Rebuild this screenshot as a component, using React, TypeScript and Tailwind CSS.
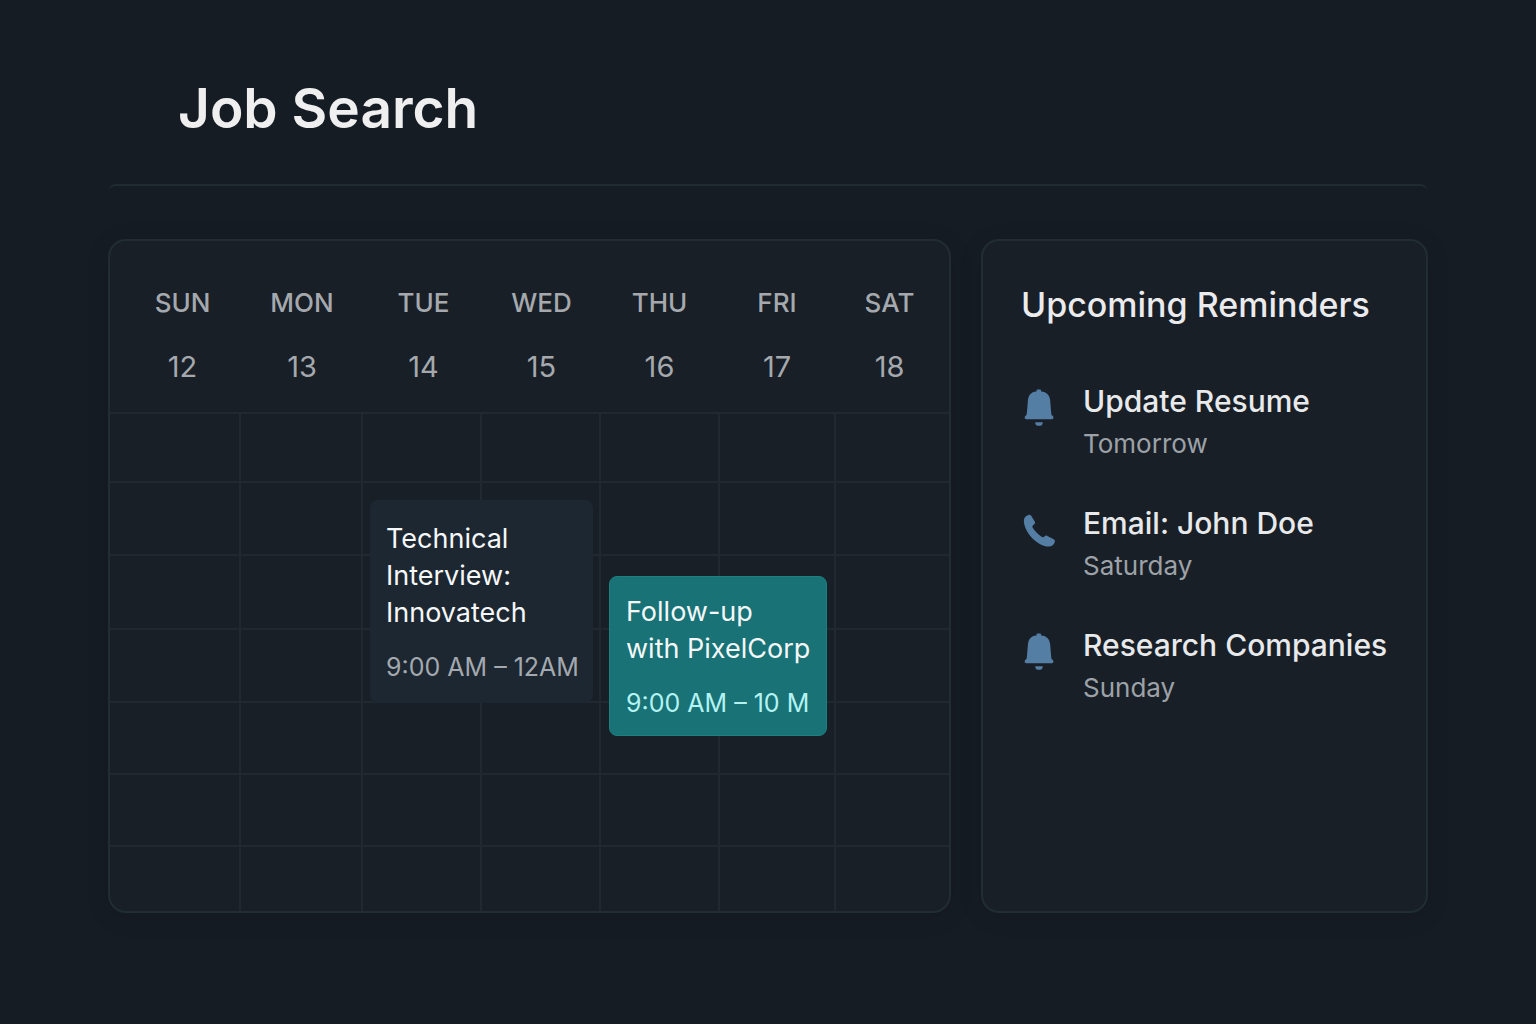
import React from "react";

type CalendarEvent = {
  row: number;
  col: number;
  lines: string[];
  time: string;
  tone: "slate" | "teal";
};

const days = [
  { name: "SUN", date: 12, width: "w-[131px]", pad: "pl-3.5" },
  { name: "MON", date: 13, width: "w-[122px]", pad: "" },
  { name: "TUE", date: 14, width: "w-[119px]", pad: "pl-0.5" },
  { name: "WED", date: 15, width: "w-[119px]", pad: "" },
  { name: "THU", date: 16, width: "w-[119px]", pad: "pr-0.5" },
  { name: "FRI", date: 17, width: "w-[116px]", pad: "pr-0.5" },
  { name: "SAT", date: 18, width: "w-[113px]", pad: "pr-1.5" },
];

const rowHeights = ["h-[69px]", "h-[73px]", "h-[74px]", "h-[73px]", "h-[72px]", "h-[72px]", "h-[66px]"];

const events: CalendarEvent[] = [
  { row: 1, col: 2, lines: ["Technical", "Interview:", "Innovatech"], time: "9:00 AM – 12AM", tone: "slate" },
  { row: 2, col: 4, lines: ["Follow-up", "with PixelCorp"], time: "9:00 AM – 10 M", tone: "teal" },
];

const reminders = [
  { icon: "bell", title: "Update Resume", when: "Tomorrow" },
  { icon: "phone", title: "Email: John Doe", when: "Saturday" },
  { icon: "bell", title: "Research Companies", when: "Sunday" },
];

function BellIcon() {
  return (
    <svg viewBox="0 0 32 40" className="h-10 w-8 shrink-0 fill-[#557ea5]" aria-hidden="true">
      <path d="M13.500 2.600c0-.8.500-1.200 1.200-1.200h2.200c.7 0 1.200.4 1.200 1.200v.9c5.800.4 8.500 3.800 9.100 9.300.5 5 .6 9.800 1.300 14.200l.8.600c.7.4 1.100.9 1.100 1.700v.5c0 .9-.6 1.400-1.500 1.400H3.200c-.9 0-1.500-.5-1.500-1.400v-.5c0-.8.4-1.300 1.100-1.700l.8-.6c.7-4.400.8-9.200 1.300-14.200.5-5.500 2.900-8.900 8.600-9.300z" />
      <path d="M12.300 34.200h7.400v.9c0 1.600-1.100 2.600-2.600 2.600h-2.200c-1.500 0-2.600-1-2.600-2.600z" />
    </svg>
  );
}

function PhoneIcon() {
  return (
    <svg viewBox="0 0 32 40" className="h-10 w-8 shrink-0 fill-[#557ea5]" aria-hidden="true">
      <path d="M.9 10.200C1 7.600 3 5.400 5.500 4.900c1.400-.3 2.500.3 3.200 1.500l3 5c.6 1 .5 1.900-.3 2.700l-1.500 1.500c-.6.6-.7 1.200-.3 2 2.200 3.800 5.600 7.200 9.400 9.400.8.500 1.400.4 2-.2l.7-.6c.8-.7 1.700-.8 2.700-.3l6.200 3.300c1.100.6 1.500 1.500 1.200 2.700-.7 2.700-3 4.500-5.700 4.600C15.500 37 .5 22.500.9 10.200z" />
    </svg>
  );
}

function EventCard({ event }: { event: CalendarEvent }) {
  const teal = event.tone === "teal";
  return (
    <article
      className={
        teal
          ? "absolute left-2 top-5 z-10 w-[218px] rounded-lg border border-[#1c807f] bg-[#187276] px-4 pb-4 pt-4 text-left whitespace-nowrap"
          : "absolute left-[7px] top-[17px] z-10 w-[223px] rounded-lg bg-[#1d2731] px-4 py-5 text-left whitespace-nowrap"
      }
    >
      <h3 className="text-[27px] leading-[37px] text-[#f5f7f8]">
        {event.lines.map((line) => (
          <span key={line} className="block">
            {line}
          </span>
        ))}
      </h3>
      <p className={teal ? "mt-5 text-[25px] leading-8 text-[#b4f3f2]" : "mt-5 text-[25px] leading-8 text-[#a3a9af]"}>
        {event.time}
      </p>
    </article>
  );
}

export default function App() {
  return (
    <div className="min-h-screen bg-[#161c24] px-[108px] pb-12 pt-[76px] font-['Inter','Liberation_Sans',sans-serif]">
      <header className="pl-[70px]">
        <h1 className="text-[55px] leading-[64px] font-semibold text-[#efeff0]">Job Search</h1>
      </header>
      <div className="mt-11 h-[55px] rounded-t-lg border-t-2 border-[#1f2a33]" />

      <main className="grid grid-cols-[minmax(0,843fr)_minmax(0,447fr)] gap-[30px]">
        <section
          aria-label="Calendar"
          className="rounded-[18px] border-2 border-[#212c35] bg-[#191f27] shadow-[0_4px_24px_rgba(0,0,0,0.1)]"
        >
          <table className="w-full table-fixed border-separate border-spacing-0">
            <thead>
              <tr>
                {days.map((day) => (
                  <th key={day.name} scope="col" className={`${day.width} ${day.pad} h-[171px] p-0 pt-11 align-top font-normal`}>
                    <span className="block text-[26px] leading-9 font-medium text-[#a5a9ae]">{day.name}</span>
                    <span className="mt-7 block text-[29px] leading-9 text-[#a5a9ae]">{day.date}</span>
                  </th>
                ))}
              </tr>
            </thead>
            <tbody>
              {rowHeights.map((height, row) => (
                <tr key={row} className={height}>
                  {days.map((day, col) => {
                    const event = events.find((e) => e.row === row && e.col === col);
                    return (
                      <td
                        key={day.name}
                        className="relative border-t-2 border-r-2 border-[#202830] p-0 last:border-r-0"
                      >
                        {event && <EventCard event={event} />}
                      </td>
                    );
                  })}
                </tr>
              ))}
            </tbody>
          </table>
        </section>

        <aside className="rounded-[18px] border-2 border-[#212c35] bg-[#191f27] pl-[38px] pt-11 shadow-[0_4px_24px_rgba(0,0,0,0.1)]">
          <h2 className="text-[34px] leading-10 font-medium whitespace-nowrap text-[#ebebed]">Upcoming Reminders</h2>
          <ul className="mt-[55px] flex flex-col gap-[38px] pl-0.5">
            {reminders.map((item) => (
              <li key={item.title} className="flex gap-7">
                <span className="pt-2">{item.icon === "bell" ? <BellIcon /> : <PhoneIcon />}</span>
                <div className="whitespace-nowrap">
                  <h3 className="text-[30px] leading-[42px] font-medium text-[#e8e9eb]">{item.title}</h3>
                  <p className="mt-0.5 text-[26px] leading-10 text-[#9da2a8]">{item.when}</p>
                </div>
              </li>
            ))}
          </ul>
        </aside>
      </main>
    </div>
  );
}
